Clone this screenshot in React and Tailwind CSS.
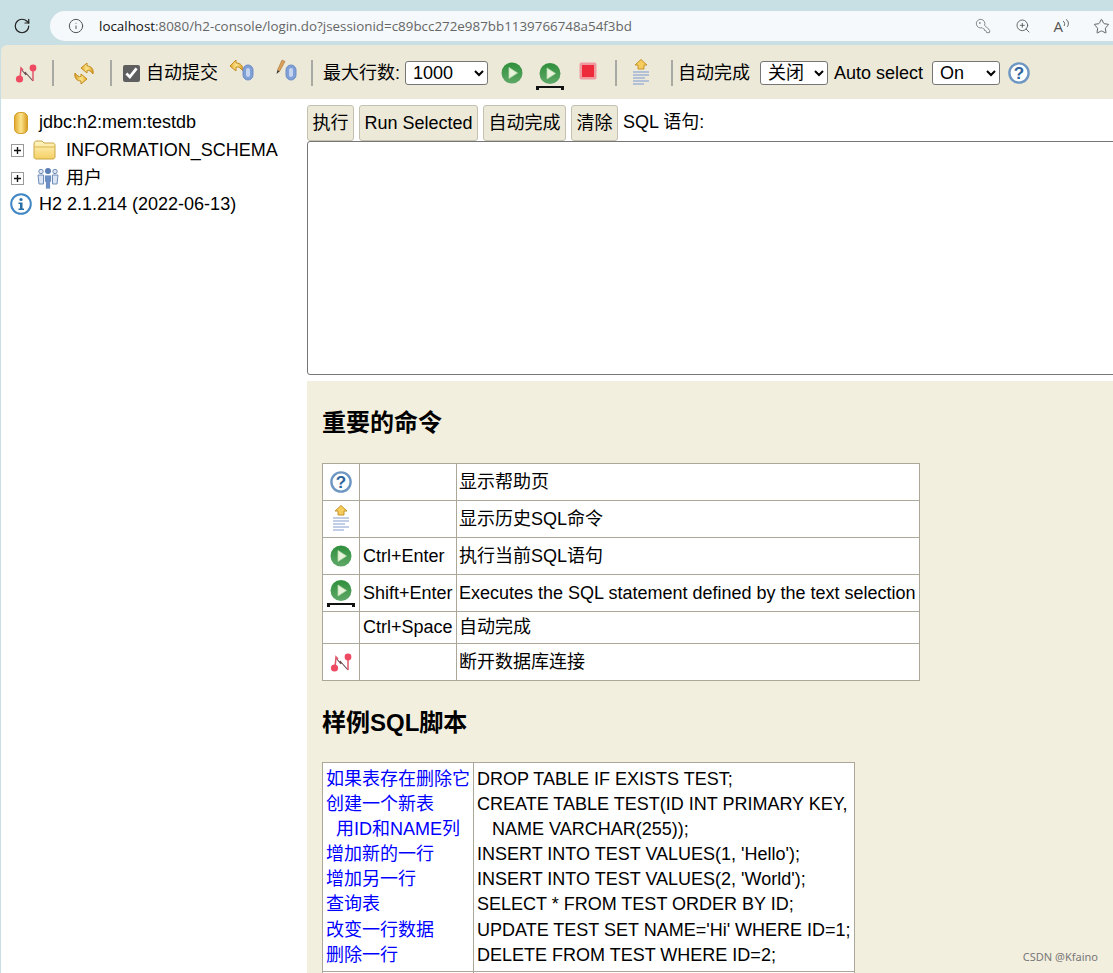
import React from "react";
import { RotateCw, Info, KeyRound, ZoomIn, Star } from "lucide-react";

const SANS = "[font-family:'Liberation_Sans','Noto_Sans_CJK_SC',sans-serif]";

function Gradients() {
  return (
    <svg width="0" height="0" className="absolute">
      <defs>
        <linearGradient id="green" x1="0" y1="0" x2="0" y2="1">
          <stop offset="0" stopColor="#2f8f3c" />
          <stop offset="1" stopColor="#5fa868" />
        </linearGradient>
        <linearGradient id="gold" x1="0" y1="0" x2="1" y2="0">
          <stop offset="0" stopColor="#e3a92c" />
          <stop offset="0.5" stopColor="#fbe58e" />
          <stop offset="1" stopColor="#d99a1e" />
        </linearGradient>
        <linearGradient id="folder" x1="0" y1="0" x2="0" y2="1">
          <stop offset="0" stopColor="#fff6c4" />
          <stop offset="1" stopColor="#f5cf62" />
        </linearGradient>
      </defs>
    </svg>
  );
}

function DisconnectIcon() {
  return (
    <svg width="22" height="22" viewBox="0 0 22 22" className="shrink-0">
      <path d="M6 7 L11 13 L10 10 L18 19" fill="none" stroke="#6a4a4e" strokeWidth="1.1" />
      <path d="M5 17 L6 6 L8 8" fill="none" stroke="#e2566a" strokeWidth="1.5" />
      <path d="M18 19 L18 7" fill="none" stroke="#e2566a" strokeWidth="1.5" />
      <circle cx="4.5" cy="17" r="3.6" fill="#ee4a62" />
      <circle cx="18" cy="6" r="3.4" fill="#ee4a62" />
    </svg>
  );
}

function RefreshIcon() {
  const arrow = "M9 7 L15 2 L15 5 C19 5 22 8 21 13 C19 10 17 9 15 9.5 L15 12 Z";
  return (
    <svg width="24" height="24" viewBox="0 0 24 24" className="shrink-0">
      <path d={arrow} fill="url(#gold)" stroke="#c28a1c" strokeWidth="1" />
      <path d={arrow} transform="rotate(180 12 12.5)" fill="url(#gold)" stroke="#c28a1c" strokeWidth="1" />
    </svg>
  );
}

function Cylinder({ x }) {
  return (
    <g>
      <rect x={x} y="6" width="10" height="15" rx="5" fill="#7f9fd6" stroke="#6f8fc8" />
      <rect x={x + 3} y="9" width="4" height="9" rx="2" fill="#c5d5ef" />
    </g>
  );
}

function RollbackIcon() {
  return (
    <svg width="26" height="24" viewBox="0 0 26 24" className="shrink-0">
      <path d="M1 7 L7 1 L7 4 C12 4 14 7 14 12 L11 9 C10 8 9 8 7 8 L7 12 Z" fill="url(#gold)" stroke="#c28a1c" />
      <Cylinder x={14} />
    </svg>
  );
}

function CommitIcon() {
  return (
    <svg width="26" height="24" viewBox="0 0 26 24" className="shrink-0">
      <path d="M2.5 11 L7 1 L10 2.5 L4.5 12.5 Z" fill="#d9a05a" stroke="#a9743a" strokeWidth="0.6" />
      <path d="M2.5 11 L4.5 12.5 L1.5 15 Z" fill="#333" />
      <Cylinder x={11} />
    </svg>
  );
}

function RunIcon() {
  return (
    <svg width="22" height="22" viewBox="0 0 22 22" className="shrink-0">
      <circle cx="11" cy="11" r="10.5" fill="url(#green)" />
      <path d="M8 5.5 L16.5 11 L8 16.5 Z" fill="#e8f3dc" stroke="#b7d8a8" strokeWidth="0.8" />
    </svg>
  );
}

function RunSelectedIcon() {
  return (
    <svg width="28" height="28" viewBox="0 0 28 28" className="shrink-0">
      <circle cx="14" cy="11.5" r="10.5" fill="url(#green)" />
      <path d="M11 6 L19.5 11.5 L11 17 Z" fill="#e8f3dc" stroke="#b7d8a8" strokeWidth="0.8" />
      <path d="M1.5 25 L26.5 25" stroke="#111" strokeWidth="2" />
      <rect x="0" y="24" width="3" height="4" fill="#111" />
      <rect x="25" y="24" width="3" height="4" fill="#111" />
    </svg>
  );
}

function StopIcon() {
  return (
    <svg width="18" height="18" viewBox="0 0 18 18" className="shrink-0">
      <rect x="0.5" y="0.5" width="17" height="17" rx="2" fill="#ef9a9f" />
      <rect x="3" y="3" width="12" height="12" fill="#ee2b3a" />
    </svg>
  );
}

function HistoryIcon() {
  return (
    <svg width="18" height="28" viewBox="0 0 18 28" className="shrink-0">
      <path d="M9 0.5 L15 6 L12 6 L12 10 L6 10 L6 6 L3 6 Z" fill="#f6cd5c" stroke="#c5932a" />
      <g stroke="#9fb3d9" strokeWidth="1.3">
        <path d="M1 13 H17" />
        <path d="M1 16 H17" />
        <path d="M1 19 H13" />
        <path d="M1 22 H17" />
        <path d="M1 25 H12" />
      </g>
    </svg>
  );
}

function HelpIcon() {
  return (
    <svg width="22" height="22" viewBox="0 0 22 22" className="shrink-0">
      <circle cx="11" cy="11" r="9.6" fill="#fff" stroke="#6d97c2" strokeWidth="2.4" />
      <text x="11" y="17" textAnchor="middle" fontSize="17" fontWeight="700" fill="#2f659c" fontFamily="Liberation Sans">
        ?
      </text>
    </svg>
  );
}

function InfoIcon() {
  return (
    <svg width="22" height="22" viewBox="0 0 22 22" className="shrink-0">
      <circle cx="11" cy="11" r="9.8" fill="#fff" stroke="#3f86c4" strokeWidth="2" />
      <circle cx="11" cy="6.5" r="1.6" fill="#2a6ea8" />
      <path d="M8.5 9.5 H12.5 V15.5 H14 V17 H8.5 V15.5 H10 V11 H8.5 Z" fill="#2a6ea8" />
    </svg>
  );
}

function DbIcon() {
  return (
    <svg width="14" height="22" viewBox="0 0 14 22" className="shrink-0">
      <rect x="0.5" y="0.5" width="13" height="21" rx="5" fill="url(#gold)" stroke="#d19a22" />
    </svg>
  );
}

function FolderIcon() {
  return (
    <svg width="23" height="20" viewBox="0 0 23 20" className="shrink-0">
      <path d="M1 4 C1 2 2 1 4 1 H9 L11 3 H20 C21 3 22 4 22 5 V17 C22 18 21 19 20 19 H3 C2 19 1 18 1 17 Z" fill="url(#folder)" stroke="#c9a544" />
      <path d="M1.5 7 H21.5" stroke="#d9b550" />
    </svg>
  );
}

function UsersIcon() {
  return (
    <svg width="22" height="24" viewBox="0 0 22 24" className="shrink-0">
      <g fill="#dbe5f3" stroke="#6f8db8" strokeWidth="1">
        <circle cx="4" cy="5.5" r="2.2" />
        <circle cx="18" cy="5.5" r="2.2" />
        <path d="M1 9 H6.5 V18 H2 Z" />
        <path d="M15.5 9 H21 L20 18 H15.5 Z" />
      </g>
      <circle cx="11" cy="5" r="3" fill="#5b7fb5" />
      <path d="M7.5 9 H14.5 V16 H13.5 V23 H8.5 V16 H7.5 Z" fill="#6c8fc3" stroke="#fff" strokeWidth="0.8" />
    </svg>
  );
}

function PlusBox() {
  return (
    <span className="flex h-[13px] w-[13px] shrink-0 items-center justify-center border border-[#9a9a9a] bg-white">
      <svg width="9" height="9" viewBox="0 0 9 9">
        <path d="M1 4.5 H8 M4.5 1 V8" stroke="#111" strokeWidth="1.4" />
      </svg>
    </span>
  );
}

function Sep({ className }) {
  return <span className={`h-[26px] w-[2px] shrink-0 bg-[#a9a9a4] ${className}`} />;
}

function Select({ value, options, className }) {
  return (
    <select
      defaultValue={value}
      className={`h-[24px] shrink-0 rounded-[3px] border border-[#767676] bg-white pl-[3px] text-[18px] text-black ${className}`}
    >
      {options.map((o) => (
        <option key={o}>{o}</option>
      ))}
    </select>
  );
}

function AddressBar() {
  return (
    <div className="flex h-[45px] shrink-0 items-start bg-[#c8dfe4] pt-[11px]">
      <RotateCw size={18} strokeWidth={1.6} className="ml-[13px] mt-[6px] shrink-0 text-[#222]" />
      <div className="ml-[19px] flex h-[30px] flex-1 items-center rounded-l-[15px] bg-[#f5f9fb]">
        <Info size={16} strokeWidth={1.5} className="ml-[18px] text-[#555]" />
        <span className="ml-[15px] whitespace-nowrap text-[13.38px] text-[#666] [font-family:'Open_Sans',sans-serif]">
          <span className="text-[#111]">localhost</span>:8080/h2-console/login.do?jsessionid=c89bcc272e987bb1139766748a54f3bd
        </span>
        <KeyRound size={16} strokeWidth={1.3} className="ml-auto -scale-x-100 text-[#777]" />
        <ZoomIn size={16} strokeWidth={1.3} className="ml-[24px] text-[#555]" />
        <span className="ml-[23px] flex items-start text-[#555]">
          <span className="text-[15px] leading-none [font-family:'Open_Sans',sans-serif]">A</span>
          <svg width="8" height="10" viewBox="0 0 8 10" className="-ml-[1px]">
            <path d="M1 2 C3 3 3 6 2 7 M4 0.5 C7 2 7 6 5 8" fill="none" stroke="#666" />
          </svg>
        </span>
        <Star size={17} strokeWidth={1.3} className="ml-[23px] mr-[3px] shrink-0 text-[#555]" />
      </div>
    </div>
  );
}

function Toolbar() {
  return (
    <div className="flex h-[54px] shrink-0 items-center overflow-hidden rounded-tl-[6px] bg-[#ece9d8] pt-[2px] text-[18px] text-black">
      <span className="ml-[14px]"><DisconnectIcon /></span>
      <Sep className="ml-[15px]" />
      <span className="ml-[18px]"><RefreshIcon /></span>
      <Sep className="ml-[14px]" />
      <input type="checkbox" defaultChecked className="ml-[11px] h-[17px] w-[17px] shrink-0 accent-[#5f5f5f]" />
      <span className="ml-[6px] shrink-0">自动提交</span>
      <span className="ml-[11px] mb-[4px]"><RollbackIcon /></span>
      <span className="ml-[20px] mb-[4px]"><CommitIcon /></span>
      <Sep className="ml-[10px]" />
      <span className="ml-[10px] shrink-0">最大行数:</span>
      <Select value="1000" options={["1000"]} className="ml-[5px] w-[83px]" />
      <span className="ml-[13px]"><RunIcon /></span>
      <span className="ml-[13px] mt-[5px]"><RunSelectedIcon /></span>
      <span className="ml-[15px] mb-[4px]"><StopIcon /></span>
      <Sep className="ml-[18px]" />
      <span className="ml-[15px]"><HistoryIcon /></span>
      <Sep className="ml-[21px]" />
      <span className="ml-[5px] shrink-0">自动完成</span>
      <Select value="关闭" options={["关闭"]} className="ml-[10px] w-[68px]" />
      <span className="ml-[6px] shrink-0">Auto select</span>
      <Select value="On" options={["On"]} className="ml-[9px] w-[68px]" />
      <span className="ml-[8px]"><HelpIcon /></span>
    </div>
  );
}

function Sidebar() {
  return (
    <div className="w-[306px] shrink-0 bg-white pt-[10px] text-[18px] text-black">
      <div className="flex h-[27px] items-center pl-[13px]">
        <DbIcon />
        <span className="ml-[11px]">jdbc:h2:mem:testdb</span>
      </div>
      <div className="flex h-[28px] items-center pl-[10px]">
        <PlusBox />
        <span className="ml-[9px]"><FolderIcon /></span>
        <span className="ml-[10px]">INFORMATION_SCHEMA</span>
      </div>
      <div className="flex h-[28px] items-center pl-[10px]">
        <PlusBox />
        <span className="ml-[13px]"><UsersIcon /></span>
        <span className="ml-[7px]">用户</span>
      </div>
      <div className="flex h-[24px] items-center pl-[9px]">
        <InfoIcon />
        <span className="ml-[7px]">H2 2.1.214 (2022-06-13)</span>
      </div>
    </div>
  );
}

function QueryButton({ children, className }) {
  return (
    <button className={`h-[36px] rounded-[3px] border border-[#c4c1b2] bg-[#ece9d8] text-[18px] text-black ${className}`}>
      {children}
    </button>
  );
}

const commands = [
  { icon: <HelpIcon />, keys: "", text: "显示帮助页", h: "h-[37px]" },
  { icon: <HistoryIcon />, keys: "", text: "显示历史SQL命令", h: "h-[37px]" },
  { icon: <RunIcon />, keys: "Ctrl+Enter", text: "执行当前SQL语句", h: "h-[37px]" },
  { icon: <RunSelectedIcon />, keys: "Shift+Enter", text: "Executes the SQL statement defined by the text selection", h: "h-[37px]" },
  { icon: null, keys: "Ctrl+Space", text: "自动完成", h: "h-[32px]" },
  { icon: <DisconnectIcon />, keys: "", text: "断开数据库连接", h: "h-[37px]" },
];

const samples = [
  ["如果表存在删除它", "DROP TABLE IF EXISTS TEST;"],
  ["创建一个新表", "CREATE TABLE TEST(ID INT PRIMARY KEY,"],
  ["\u00a0\u00a0用ID和NAME列", "\u00a0\u00a0\u00a0NAME VARCHAR(255));"],
  ["增加新的一行", "INSERT INTO TEST VALUES(1, 'Hello');"],
  ["增加另一行", "INSERT INTO TEST VALUES(2, 'World');"],
  ["查询表", "SELECT * FROM TEST ORDER BY ID;"],
  ["改变一行数据", "UPDATE TEST SET NAME='Hi' WHERE ID=1;"],
  ["删除一行", "DELETE FROM TEST WHERE ID=2;"],
];

function Help() {
  return (
    <div className="flex-1 bg-[#f3efdf] pl-[15px] text-[18px] text-black">
      <h2 className="pt-[27px] text-[24px] font-bold leading-[30px]">重要的命令</h2>
      <table className="mt-[25px] w-[598px] table-fixed border-collapse bg-white">
        <colgroup>
          <col className="w-[37px]" />
          <col className="w-[97px]" />
          <col />
        </colgroup>
        <tbody>
          {commands.map((c) => (
            <tr key={c.text} className={c.h}>
              <td className="border border-[#aca899] p-0">
                <div className="flex justify-center">{c.icon}</div>
              </td>
              <td className="whitespace-nowrap border border-[#aca899] px-[3px] pt-0 pb-[1px] leading-[20px]">{c.keys}</td>
              <td className="whitespace-nowrap border border-[#aca899] pl-[2px] pr-[2px] pt-0 pb-[1px] leading-[20px]">{c.text}</td>
            </tr>
          ))}
        </tbody>
      </table>
      <h2 className="mt-[27px] text-[24px] font-bold leading-[30px]">样例SQL脚本</h2>
      <table className="mt-[24px] w-[533px] table-fixed border-collapse bg-white">
        <colgroup>
          <col className="w-[151px]" />
          <col />
        </colgroup>
        <tbody>
          <tr>
            <td className="border border-[#aca899] pl-[3px] pr-[1px] pt-[3.5px] pb-[2.5px] align-top text-[#0000ff]">
              {samples.map(([label]) => (
                <div key={label} className="h-[25.2px] whitespace-nowrap leading-[25.2px]">{label}</div>
              ))}
            </td>
            <td className="border border-[#aca899] px-[3px] pt-[3.5px] pb-[2.5px] align-top">
              {samples.map(([, sql]) => (
                <div key={sql} className="h-[25.2px] whitespace-nowrap leading-[25.2px]">{sql}</div>
              ))}
            </td>
          </tr>
          <tr>
            <td className="border border-[#aca899] p-0 h-[20px]" />
            <td className="border border-[#aca899] p-0" />
          </tr>
        </tbody>
      </table>
    </div>
  );
}

export default function App() {
  return (
    <div className={`relative flex h-[973px] w-[1113px] flex-col overflow-hidden bg-[#c8dfe4] ${SANS}`}>
      <Gradients />
      <AddressBar />
      <div className="flex min-h-0 flex-1 flex-col pl-px">
        <Toolbar />
        <div className="flex min-h-0 flex-1">
          <Sidebar />
          <div className="flex min-w-0 flex-1 flex-col bg-white">
            <div className="flex h-[42px] shrink-0 items-end text-[18px] text-black">
              <QueryButton className="w-[47px]">执行</QueryButton>
              <QueryButton className="ml-[5px] w-[119px]">Run Selected</QueryButton>
              <QueryButton className="ml-[5px] w-[83px]">自动完成</QueryButton>
              <QueryButton className="ml-[5px] w-[47px]">清除</QueryButton>
              <span className="ml-[5px] pb-[5px]">SQL 语句:</span>
            </div>
            <div className="h-[234px] w-[830px] shrink-0 rounded-l-[3px] border border-[#767676] bg-white" />
            <div className="h-[6px] shrink-0" />
            <Help />
          </div>
        </div>
      </div>
      <span className="absolute bottom-[8px] right-[15px] text-[11px] text-[#777] [font-family:'Noto_Sans',sans-serif]">
        CSDN @Kfaino
      </span>
    </div>
  );
}
